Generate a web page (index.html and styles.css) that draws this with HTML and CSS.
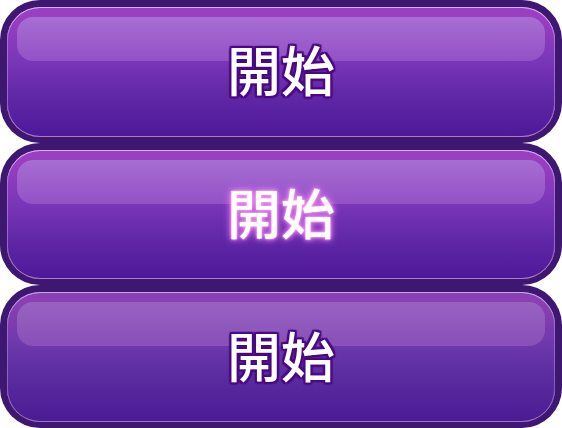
FILE: index.html
```html
<!DOCTYPE html>
<html lang="zh-Hant">
<head>
<meta charset="utf-8">
<link rel="stylesheet" href="styles.css">
</head>
<body>
<div class="stack">
  <button class="btn"><span class="inner"><span class="label">開始</span></span></button>
  <button class="btn btn-hover"><span class="inner"><span class="label">開始</span></span></button>
  <button class="btn btn-muted"><span class="inner"><span class="label">開始</span></span></button>
</div>
</body>
</html>
```
FILE: styles.css
```css
html, body {
  margin: 0;
  padding: 0;
  background: #ffffff;
}
.stack {
  width: 562px;
  height: 428px;
  display: flex;
  flex-direction: column;
}
.btn {
  flex: 1;
  display: flex;
  margin: 0;
  padding: 7px 7px 6px 7px;
  border: 0;
  border-radius: 40px;
  background: #3e1870;
  font: inherit;
  cursor: pointer;
}
.inner {
  position: relative;
  flex: 1;
  display: flex;
  align-items: center;
  justify-content: center;
  border-radius: 33px;
  background: linear-gradient(to bottom, #9a3fc0 0px, #9a3fc0 10px, #7a36b8 54px, #6229a8 85px, #4d1898 100%);
  box-shadow: inset 0 1px 0 #d4aefa, inset 0 0 0 1px rgba(200, 150, 240, 0.55), inset 0 -1px 0 rgba(190, 130, 150, 0.6);
  overflow: hidden;
}
.inner::before {
  content: "";
  position: absolute;
  left: 10px;
  right: 10px;
  top: 10px;
  height: 44px;
  border-radius: 16px;
  background: linear-gradient(to bottom, #a76ed3, #9451c6);
}
.label {
  position: relative;
  font-family: "Noto Sans CJK TC", "Noto Sans CJK SC", sans-serif;
  font-weight: 500;
  font-size: 54px;
  line-height: 1;
  color: #ffffff;
  margin-top: -5px;
  text-shadow:
    2px 0 1px #4a0a82, -2px 0 1px #4a0a82, 0 2px 1px #4a0a82, 0 -2px 1px #4a0a82,
    2px 2px 1px #4a0a82, -2px 2px 1px #4a0a82, 2px -2px 1px #4a0a82, -2px -2px 1px #4a0a82;
}
.btn-hover .label {
  text-shadow: 0 0 2px #ffd0ff, 0 0 5px #ff90f4, 0 0 9px #f27cff;
}
.btn-muted .inner {
  background: linear-gradient(to bottom, #8a40b2 0px, #8a40b2 10px, #6c38ac 54px, #5a2ca0 85px, #4a1a92 100%);
  box-shadow: inset 0 1px 0 #c8a4ee, inset 0 0 0 1px rgba(190, 150, 230, 0.5), inset 0 -1px 0 rgba(170, 120, 200, 0.5);
}
.btn-muted .inner::before {
  background: linear-gradient(to bottom, #9862c2, #8850b8);
}
```
